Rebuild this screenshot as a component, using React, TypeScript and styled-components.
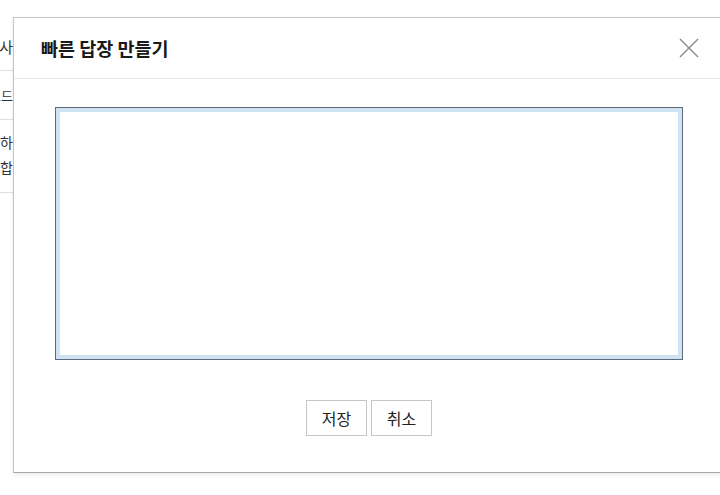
import styled, { createGlobalStyle } from "styled-components";

const GlobalStyle = createGlobalStyle`
  html, body {
    margin: 0;
    padding: 0;
    background: #fff;
    overflow: hidden;
  }
  body {
    font-family: "Noto Sans CJK KR", "Noto Sans", "Liberation Sans", sans-serif;
    color: #222;
  }
`;

// rows of the page behind the dialog, mostly hidden by it
const rows = [
  { top: 34, bottom: 11, size: 15, lines: ["문의 감사"] },
  { top: 12, bottom: 11, size: 13, lines: ["확인 코드"] },
  { top: 10, bottom: 12, size: 14, lines: ["참고하", "감사합"] },
];

const App = () => {
  return (
    <>
      <GlobalStyle />
      <Page>
        <BackList>
          {rows.map((row, i) => (
            <BackRow key={i} $top={row.top} $bottom={row.bottom} $size={row.size}>
              {row.lines.map((line) => (
                <BackLine key={line}>{line}</BackLine>
              ))}
            </BackRow>
          ))}
        </BackList>

        <Modal>
          <ModalHeader>
            <ModalTitle>빠른 답장 만들기</ModalTitle>
            <CloseButton aria-label="닫기">
              <svg width="20" height="20" viewBox="0 0 20 20">
                <path
                  d="M1 1 L19 19 M19 1 L1 19"
                  stroke="#8a8a8a"
                  strokeWidth="1.4"
                  fill="none"
                />
              </svg>
            </CloseButton>
          </ModalHeader>
          <ModalBody>
            <ReplyInput />
            <ButtonRow>
              <ActionButton>저장</ActionButton>
              <ActionButton>취소</ActionButton>
            </ButtonRow>
          </ModalBody>
        </Modal>
      </Page>
    </>
  );
};

const Page = styled.div`
  position: relative;
  width: 720px;
  height: 495px;
  overflow: hidden;
`;

const BackList = styled.div`
  width: 13px;
  display: flex;
  flex-direction: column;
`;

interface BackRowProps {
  $top: number;
  $bottom: number;
  $size: number;
}

const BackRow = styled.div<BackRowProps>`
  display: flex;
  flex-direction: column;
  align-items: flex-end;
  padding: ${(p) => p.$top}px 0 ${(p) => p.$bottom}px;
  border-bottom: 1px solid #dedede;
  font-size: ${(p) => p.$size}px;
  line-height: 25px;
  color: #333;
  overflow: hidden;
`;

const BackLine = styled.div`
  white-space: nowrap;
  height: 25px;
`;

const Modal = styled.div`
  position: absolute;
  top: 17px;
  left: 13px;
  width: 720px;
  height: 454px;
  background: #fff;
  border: 1px solid #c4c4c4;
  border-bottom-color: #a8a8a8;
  box-shadow: 0 2px 4px rgba(0, 0, 0, 0.08);
  display: flex;
  flex-direction: column;
`;

const ModalHeader = styled.div`
  display: flex;
  align-items: center;
  justify-content: space-between;
  height: 60px;
  padding: 0 35px 0 27px;
  border-bottom: 1px solid #e6e6e6;
`;

const ModalTitle = styled.div`
  font-size: 18.5px;
  font-weight: 700;
  color: #1a1a1a;
`;

const CloseButton = styled.button`
  display: flex;
  padding: 0;
  border: 0;
  background: none;
  cursor: pointer;
`;

const ModalBody = styled.div`
  display: flex;
  flex-direction: column;
  padding: 28px 0 0 41px;
`;

const ReplyInput = styled.textarea`
  box-sizing: border-box;
  width: 628px;
  height: 253px;
  margin: 0;
  padding: 6px;
  resize: none;
  border: 1px solid #5f6b78;
  box-shadow: inset 0 0 0 4px #cfe3f5;
  outline: none;
  font-family: inherit;
  font-size: 14px;
`;

const ButtonRow = styled.div`
  display: flex;
  justify-content: center;
  gap: 4px;
  width: 628px;
  margin-top: 40px;
`;

const ActionButton = styled.button`
  box-sizing: border-box;
  width: 61px;
  height: 36px;
  padding: 0;
  border: 1px solid #c6c6c6;
  background: #fff;
  font-family: inherit;
  font-size: 16px;
  color: #222;
  cursor: pointer;
`;

export default App;
